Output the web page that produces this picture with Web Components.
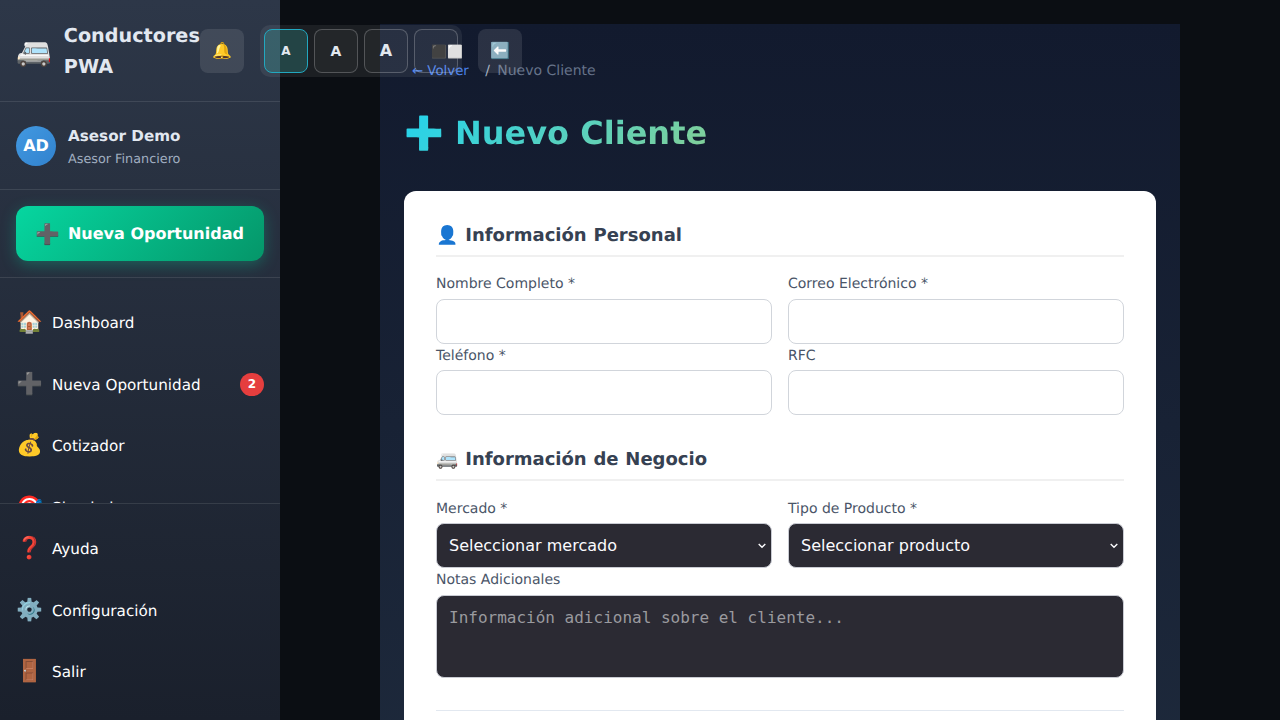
<!DOCTYPE html>
<html lang="es">
<head>
<meta charset="utf-8">
<title>Nuevo Cliente</title>
<style>
  html, body { margin: 0; height: 100%; }
  body {
    background: #0b0e13;
    font-family: "DejaVu Sans", sans-serif;
    text-rendering: geometricPrecision;
    overflow: hidden;
  }
</style>
</head>
<body>
<app-shell>
  <side-bar slot="side"></side-bar>
  <top-controls slot="top"></top-controls>
  <client-page slot="main"></client-page>
</app-shell>

<script>
class AppShell extends HTMLElement {
  constructor() {
    super()
    const root = this.attachShadow({mode: 'open'})
    root.innerHTML = `
      <style>
        :host { display: flex; position: relative; width: 1280px; height: 720px; overflow: hidden; }
        .side { flex: 0 0 280px; }
        .main { flex: 1; padding-top: 24px; display: flex; justify-content: center; }
      </style>
      <div class="side"><slot name="side"></slot></div>
      <div class="main"><slot name="main"></slot></div>
      <slot name="top"></slot>
    `
  }
}

class NavItem extends HTMLElement {
  constructor() {
    super()
    const root = this.attachShadow({mode: 'open'})
    const badge = this.getAttribute("badge")
    root.innerHTML = `
      <style>
        :host { display: flex; align-items: center; gap: 12px; height: 57.6px; margin-bottom: 4px; padding: 0 16px; box-sizing: border-box; color: #fff; font-size: 15.2px; flex: none; }
        .icon { font-size: 21.6px; width: 24px; white-space: nowrap; }
        .label { flex: 1; padding-top: 1px; }
        .badge { width: 24px; height: 23px; border-radius: 12px; background: #e53e3e; color: #fff; font-size: 12px; font-weight: 700; display: flex; align-items: center; justify-content: center; }
      </style>
      <span class="icon">${this.getAttribute("icon")}</span>
      <span class="label"><slot></slot></span>
      ${badge ? `<span class="badge">${badge}</span>` : ""}
    `
  }
}

class SideBar extends HTMLElement {
  constructor() {
    super()
    const root = this.attachShadow({mode: 'open'})
    root.innerHTML = `
      <style>
        :host { display: flex; flex-direction: column; width: 280px; height: 720px; background: linear-gradient(180deg, #2d3748 0%, #1a202c 100%); color: #e2e8f0; }
        .brand { height: 99px; padding: 2px 16px 0; border-bottom: 1px solid rgba(255,255,255,.1); display: flex; align-items: center; gap: 12px; }
        .brand .van { font-size: 28.8px; }
        .brand h1 { margin: 0; font-size: 19.2px; line-height: 30.72px; font-weight: 700; width: 120px; }
        .profile { height: 87px; border-bottom: 1px solid rgba(255,255,255,.1); display: flex; align-items: center; gap: 12px; padding: 0 16px; }
        .avatar { width: 40px; height: 40px; border-radius: 50%; background: linear-gradient(135deg, #4299e1, #3182ce); color: #fff; font-weight: 700; font-size: 16px; display: flex; align-items: center; justify-content: center; }
        .who { padding-top: 3px; }
        .name { font-size: 15.2px; line-height: 24.3px; font-weight: 700; }
        .role { font-size: 12.8px; line-height: 20.5px; margin-top: 2px; color: #a0aec0; }
        .cta { padding: 16px; border-bottom: 1px solid rgba(255,255,255,.1); }
        .cta a { display: flex; align-items: center; justify-content: center; gap: 8px; height: 55px; padding-right: 1px; box-sizing: border-box; border-radius: 12px; color: #fff; font-weight: 700; font-size: 16px; background: linear-gradient(135deg, #06d6a0, #059669); box-shadow: 0 4px 15px rgba(6,214,160,.3); }
        .cta span { font-size: 20px; }
        nav { flex: 1; min-height: 0; overflow: hidden; padding-top: 16px; display: flex; flex-direction: column; }
        .bottom { padding: 16px 0 0; height: 217px; box-sizing: border-box; border-top: 1px solid rgba(255,255,255,.1); display: flex; flex-direction: column; flex: none; }
      </style>
      <div class="brand"><span class="van">🚐</span><h1>Conductores PWA</h1></div>
      <div class="profile">
        <div class="avatar">AD</div>
        <div class="who"><div class="name">Asesor Demo</div><div class="role">Asesor Financiero</div></div>
      </div>
      <div class="cta"><a><span>➕</span>Nueva Oportunidad</a></div>
      <nav>
        <nav-item icon="🏠">Dashboard</nav-item>
        <nav-item icon="➕" badge="2">Nueva Oportunidad</nav-item>
        <nav-item icon="💰">Cotizador</nav-item>
        <nav-item icon="🎯">Simulador</nav-item>
      </nav>
      <div class="bottom">
        <nav-item icon="❓">Ayuda</nav-item>
        <nav-item icon="⚙️">Configuración</nav-item>
        <nav-item icon="🚪">Salir</nav-item>
      </div>
    `
  }
}

class TopControls extends HTMLElement {
  constructor() {
    super()
    const root = this.attachShadow({mode: 'open'})
    root.innerHTML = `
      <style>
        :host { position: absolute; top: 29px; left: 200px; display: flex; align-items: center; gap: 16px; z-index: 5; }
        button { font-family: inherit; width: 44px; height: 44px; box-sizing: border-box; padding: 0 0 1px; border-radius: 8px; color: #e2e8f0; display: flex; align-items: center; justify-content: center; font-weight: 700; }
        .solid { background: rgba(255,255,255,.1); border: 0; font-size: 16px; }
        .group { display: flex; gap: 6px; padding: 4px; margin: -4px 0; border-radius: 10px; background: rgba(255,255,255,.07); }
        .group button { background: rgba(255,255,255,.03); border: 1px solid rgba(255,255,255,.22); }
        .group button.on { background: rgba(56,178,172,.25); border-color: #22a8c0; }
        .group button.mode { font-size: 12.8px; justify-content: flex-start; padding: 1px 0 0 16px; white-space: nowrap; overflow: visible; }
      </style>
      <button class="solid">🔔</button>
      <div class="group">
        <button class="on" style="font-size:12px">A</button>
        <button style="font-size:14px">A</button>
        <button style="font-size:16px">A</button>
        <button class="mode">⬛⬜</button>
      </div>
      <button class="solid">⬅️</button>
    `
  }
}

class FormSection extends HTMLElement {
  constructor() {
    super()
    const root = this.attachShadow({mode: 'open'})
    root.innerHTML = `
      <style>
        :host { display: block; }
        h3 { margin: 0 0 15.6px; height: 31px; padding-top: 1px; line-height: 24px; font-size: 18px; font-weight: 700; word-spacing: .5px; color: #364152; border-bottom: 2px solid #f0f0f0; }
        .grid { display: grid; grid-template-columns: 1fr 1fr; column-gap: 16px; }
      </style>
      <h3>${this.getAttribute("heading")}</h3>
      <div class="grid"><slot></slot></div>
    `
  }
}

class FormField extends HTMLElement {
  constructor() {
    super()
    const root = this.attachShadow({mode: 'open'})
    const kind = this.getAttribute("kind") || "input"
    let control = `<input type="text">`
    if (kind === "select") {
      control = `<select><option>${this.getAttribute("placeholder")}</option></select>`
    } else if (kind === "textarea") {
      control = `<textarea rows="3" placeholder="${this.getAttribute("placeholder")}"></textarea>`
    }
    const chevron = `url("data:image/svg+xml,%3Csvg xmlns='http://www.w3.org/2000/svg' width='8' height='6'%3E%3Cpath d='M.7 1 4 4.3 7.3 1' fill='none' stroke='%23fbfbfe' stroke-width='1.4'/%3E%3C/svg%3E")`
    root.innerHTML = `
      <style>
        :host { display: block; }
        :host([wide]) { grid-column: 1 / -1; }
        label { display: block; padding-top: 3.8px; line-height: 16px; margin-bottom: 6.6px; font-size: 14px; color: #4a5568; }
        input, select, textarea { display: block; width: 100%; box-sizing: border-box; height: 45px; border: 1px solid #d1d5db; border-radius: 8px; padding: 0 12px; font-size: 16px; background: #fff; outline: none; margin: 0; }
        select, textarea { background-color: #2b2a33; color: #fbfbfe; border-color: #c9cbd3; font-family: "DejaVu Sans", sans-serif; }
        select { appearance: none; -webkit-appearance: none; background-image: ${chevron}; background-repeat: no-repeat; background-position: right 5px top 19px; }
        textarea { height: 83px; padding: 12px; font-family: "DejaVu Sans Mono", monospace; resize: none; }
        textarea::placeholder { color: #9a9a9f; opacity: 1; }
      </style>
      <label>${this.getAttribute("label")}</label>
      ${control}
    `
  }
}

class ClientPage extends HTMLElement {
  constructor() {
    super()
    const root = this.attachShadow({mode: 'open'})
    root.innerHTML = `
      <style>
        :host { display: block; width: 800px; height: 800px; box-sizing: border-box; padding: 0 24px; background: linear-gradient(180deg, #121a2e 0%, #1e2a3c 100%); }
        .crumbs { padding: 38px 0 0 8px; height: 18px; line-height: 18px; font-size: 14px; color: #66738a; white-space: pre; box-sizing: content-box; }
        .crumbs a { color: #4a80e8; font-size: 13.3px; }
        .crumbs .sep { margin: 0 -1.5px 0 3px; color: #a0aec0; }
        h1 { margin: 29px 0 0; width: fit-content; font-size: 32px; line-height: 48px; font-weight: 700; background: linear-gradient(135deg, #22d3ee, #84cf96); -webkit-background-clip: text; background-clip: text; color: transparent; }
        .card { margin-top: 34px; background: #fff; border-radius: 12px; padding: 32px; }
        .s2 { margin-top: 32px; }
        hr { border: 0; border-top: 1px solid #e2e8f0; margin: 32px 0 0; }
      </style>
      <div class="crumbs"><a>← Volver</a>   <span class="sep">/</span>  Nuevo Cliente</div>
      <h1>➕ Nuevo Cliente</h1>
      <div class="card">
        <form-section heading="👤 Información Personal">
          <form-field label="Nombre Completo *"></form-field>
          <form-field label="Correo Electrónico *"></form-field>
          <form-field label="Teléfono *"></form-field>
          <form-field label="RFC"></form-field>
        </form-section>
        <form-section class="s2" heading="🚐 Información de Negocio">
          <form-field label="Mercado *" kind="select" placeholder="Seleccionar mercado"></form-field>
          <form-field label="Tipo de Producto *" kind="select" placeholder="Seleccionar producto"></form-field>
          <form-field wide label="Notas Adicionales" kind="textarea" placeholder="Información adicional sobre el cliente..."></form-field>
        </form-section>
        <hr>
      </div>
    `
  }
}

customElements.define("app-shell", AppShell)
customElements.define("nav-item", NavItem)
customElements.define("side-bar", SideBar)
customElements.define("top-controls", TopControls)
customElements.define("form-section", FormSection)
customElements.define("form-field", FormField)
customElements.define("client-page", ClientPage)
</script>
</body>
</html>
